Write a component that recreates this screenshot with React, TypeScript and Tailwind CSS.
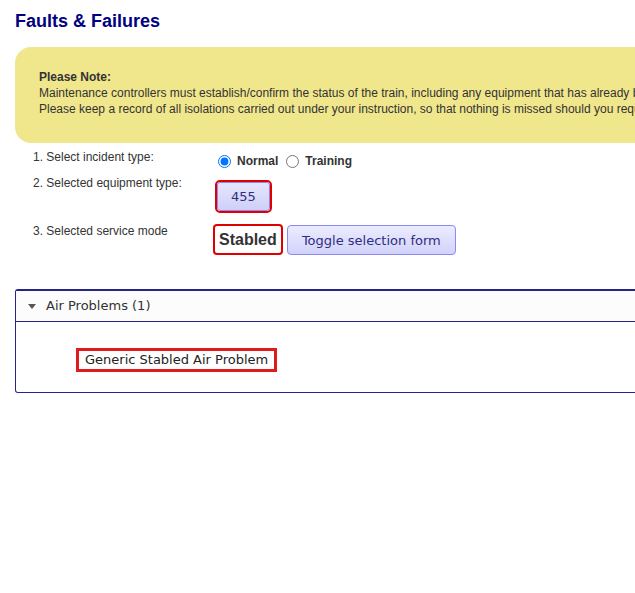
import React, { useState } from 'react';

const verdana = { fontFamily: '"DejaVu Sans", Verdana, sans-serif' };

const App: React.FC = () => {
  const [incidentType, setIncidentType] = useState<'normal' | 'training'>('normal');
  const [open, setOpen] = useState(true);

  return (
    <div className="w-full overflow-hidden bg-white min-h-[593px] font-['Liberation_Sans',Arial,sans-serif]">
      <div className="w-[1000px] px-[15px] pt-[11px]">
        <h1 className="text-[18px] leading-[21px] font-bold text-[#000080]">Faults &amp; Failures</h1>

        {/* Note box */}
        <div className="mt-[15px] rounded-[16px] bg-[#f0e68c] pl-[24px] pt-[22px] pb-[26px] text-[12px] leading-[16px] text-[#333]">
          <div className="font-bold">Please Note:</div>
          <div className="whitespace-nowrap">
            Maintenance controllers must establish/confirm the status of the train, including any equipment that has already been isolated, before proceeding.
          </div>
          <div className="whitespace-nowrap">
            Please keep a record of all isolations carried out under your instruction, so that nothing is missed should you require further assistance.
          </div>
        </div>

        {/* Selection rows */}
        <div className="pl-[18px] text-[12px] leading-[15px] text-[#333]">
          <div className="mt-[7px] flex items-start">
            <div className="w-[180px]">1. Select incident type:</div>
            <div className="flex items-center pt-[4px] font-bold">
              <input
                type="radio"
                name="incident"
                checked={incidentType === 'normal'}
                onChange={() => setIncidentType('normal')}
                className="m-0 ml-[5px] mb-[1px] h-[13px] w-[13px] accent-[#0075ff]"
              />
              <span className="ml-[6px]">Normal</span>
              <input
                type="radio"
                name="incident"
                checked={incidentType === 'training'}
                onChange={() => setIncidentType('training')}
                className="m-0 ml-[8px] mb-[1px] h-[13px] w-[13px] accent-[#0075ff]"
              />
              <span className="ml-[6px]">Training</span>
            </div>
          </div>

          <div className="mt-[7px] flex items-start">
            <div className="w-[180px]">2. Selected equipment type:</div>
            <div className="pt-[4px] pl-[2px]">
              <div className="rounded-[5px] border-2 border-[#e00000] p-0">
                <button
                  style={verdana}
                  className="h-[29px] w-[53px] rounded-[3px] border border-[#8a8af0] bg-gradient-to-b from-[#e6e6ff] to-[#cfcff8] text-[13px] text-[#2e2e80]"
                >
                  455
                </button>
              </div>
            </div>
          </div>

          <div className="mt-[11px] flex items-start">
            <div className="w-[180px]">3. Selected service mode</div>
            <div className="flex items-start">
              <div className="flex h-[31px] items-center rounded-[4px] border-2 border-[#e00000] px-[4px] text-[16px] font-bold text-[#333]">
                Stabled
              </div>
              <button
                style={verdana}
                className="mt-[1px] ml-[4px] h-[30px] w-[169px] rounded-[4px] border border-[#8a8af0] bg-gradient-to-b from-[#ececff] to-[#d2d2fa] text-[13px] text-[#2e2e80]"
              >
                Toggle selection form
              </button>
            </div>
          </div>
        </div>

        {/* Accordion */}
        <div className="mt-[34px] rounded-[3px] border border-t-2 border-[#24248a]" style={verdana}>
          <button
            onClick={() => setOpen(!open)}
            className="flex h-[31px] w-full items-center border-b border-[#24248a] bg-[#fcfcfc] pl-[12px] text-left text-[13px] text-[#333]"
          >
            <svg width="8" height="5" viewBox="0 0 8 5" className="mr-[10px]">
              <polygon points="0,0 8,0 4,5" fill="#555" />
            </svg>
            Air Problems (1)
          </button>
          {open && (
            <div className="pl-[60px] pt-[25px] pb-[20px]">
              <div className="inline-block border-[3px] border-[#e01b1b] px-[6px] text-[13px] leading-[18px] text-[#222]">
                Generic Stabled Air Problem
              </div>
            </div>
          )}
        </div>
      </div>
    </div>
  );
};

export default App;
